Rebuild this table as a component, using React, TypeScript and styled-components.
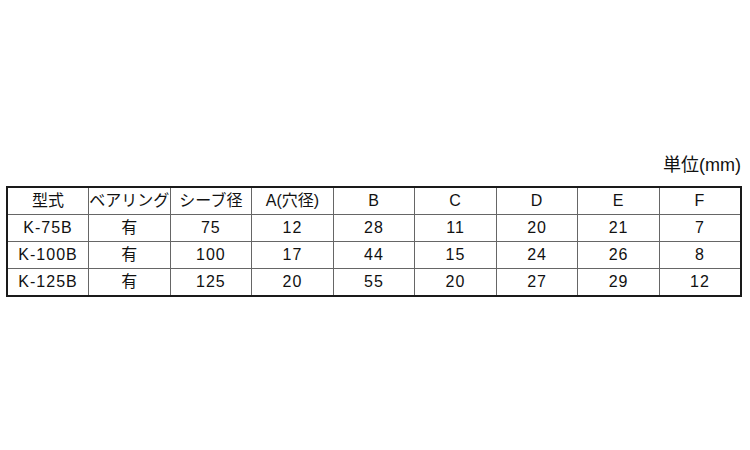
import styled, { createGlobalStyle } from 'styled-components';

const GlobalStyle = createGlobalStyle`
  html, body {
    margin: 0;
    padding: 0;
    background: #fff;
  }
  body {
    font-family: "Liberation Sans", "Noto Sans CJK JP", sans-serif;
    color: #111;
  }
`

const headers = ["型式", "ベアリング", "シーブ径", "A(穴径)", "B", "C", "D", "E", "F"];

const rows = [
  ["K-75B", "有", "75", "12", "28", "11", "20", "21", "7"],
  ["K-100B", "有", "100", "17", "44", "15", "24", "26", "8"],
  ["K-125B", "有", "125", "20", "55", "20", "27", "29", "12"],
];

const isCjk = (s: string) => /[\u3000-\u9fff]/.test(s);

export default function App() {
  return (
    <Page>
      <GlobalStyle />
      <Unit>単位(mm)</Unit>
      <Table>
        <thead>
          <tr>
            {headers.map((h) => (
              <HeadCell key={h} $cjk={isCjk(h)}>{h}</HeadCell>
            ))}
          </tr>
        </thead>
        <tbody>
          {rows.map((r) => (
            <tr key={r[0]}>
              {r.map((c, i) => (
                <Cell key={i} $cjk={isCjk(c)}>{c}</Cell>
              ))}
            </tr>
          ))}
        </tbody>
      </Table>
    </Page>
  )
}

const Page = styled.div`
  width: 750px;
  height: 450px;
  box-sizing: border-box;
  padding: 153px 9px 0 6px;
  display: flex;
  flex-direction: column;
`

const Unit = styled.div`
  align-self: flex-end;
  font-size: 18px;
  line-height: 24px;
  margin-bottom: 9px;
`

const Table = styled.table`
  width: 736px;
  border-collapse: collapse;
  table-layout: fixed;
  border: 2px solid #1a1a1a;
`

const Cell = styled.td<{ $cjk?: boolean }>`
  height: 26px;
  padding: 0;
  border: 1px solid #666;
  text-align: center;
  vertical-align: middle;
  font-size: 16px;
  line-height: 20px;
  letter-spacing: ${props => props.$cjk ? "0" : "1px"};
  white-space: nowrap;
`

const HeadCell = styled(Cell).attrs({ as: 'th' })`
  font-weight: normal;
`
